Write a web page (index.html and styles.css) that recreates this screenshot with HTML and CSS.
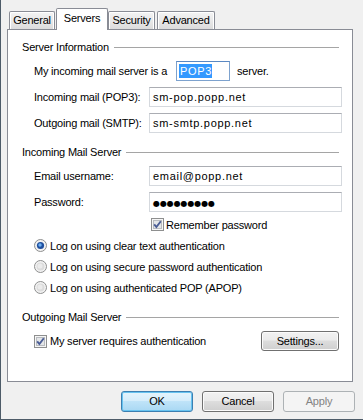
FILE: index.html
```html
<!DOCTYPE html>
<html>
<head>
<meta charset="utf-8">
<title>Servers</title>
<link rel="stylesheet" href="styles.css">
</head>
<body>
<div class="dialog">
  <div class="tabs">
    <div class="tab t-general">General</div>
    <div class="tab active t-servers">Servers</div>
    <div class="tab t-security">Security</div>
    <div class="tab t-advanced">Advanced</div>
  </div>
  <div class="panel">
    <div class="group-head"><span>Server Information</span></div>
    <div class="rows">
      <div class="row r-type">
        <span class="lbl-wide">My incoming mail server is a</span>
        <div class="textbox small focused"><span class="sel">POP3</span></div>
        <span class="after">server.</span>
      </div>
      <div class="row field">
        <span class="lbl">Incoming mail (POP3):</span>
        <div class="textbox">sm-pop.popp.net</div>
      </div>
      <div class="row field">
        <span class="lbl">Outgoing mail (SMTP):</span>
        <div class="textbox">sm-smtp.popp.net</div>
      </div>
    </div>

    <div class="group-head gap-head"><span>Incoming Mail Server</span></div>
    <div class="rows">
      <div class="row field first">
        <span class="lbl">Email username:</span>
        <div class="textbox">email@popp.net</div>
      </div>
      <div class="row field">
        <span class="lbl">Password:</span>
        <div class="textbox"><span class="dots">●●●●●●●●●</span></div>
      </div>
      <div class="row check-row remember">
        <svg class="cb" width="13" height="13" viewBox="0 0 13 13"><rect x="0.5" y="0.5" width="12" height="12" fill="#f6f6f6" stroke="#8e8f8f"/><rect x="2.5" y="2.5" width="8" height="8" fill="#e4e6e8" stroke="#b9bcc0"/><path d="M3.2 6.3 L5.4 9 L9.8 3.2" fill="none" stroke="#4a5d96" stroke-width="1.9"/></svg>
        <span>Remember password</span>
      </div>
      <div class="radios">
        <div class="radio-row">
          <svg class="rb" width="13" height="13" viewBox="0 0 13 13"><circle cx="6.5" cy="6.5" r="6" fill="#f2f2f2" stroke="#8e8f8f"/><circle cx="6.5" cy="6.5" r="3.6" fill="#1f4f9e"/><circle cx="6" cy="6" r="1.7" fill="#6fb0f0"/></svg>
          <span>Log on using clear text authentication</span>
        </div>
        <div class="radio-row">
          <svg class="rb" width="13" height="13" viewBox="0 0 13 13"><circle cx="6.5" cy="6.5" r="6" fill="#f2f2f2" stroke="#8e8f8f"/><circle cx="6.5" cy="6.5" r="4" fill="#dcdcdc"/><circle cx="6" cy="6" r="2.5" fill="#ebebeb"/></svg>
          <span>Log on using secure password authentication</span>
        </div>
        <div class="radio-row">
          <svg class="rb" width="13" height="13" viewBox="0 0 13 13"><circle cx="6.5" cy="6.5" r="6" fill="#f2f2f2" stroke="#8e8f8f"/><circle cx="6.5" cy="6.5" r="4" fill="#dcdcdc"/><circle cx="6" cy="6" r="2.5" fill="#ebebeb"/></svg>
          <span>Log on using authenticated POP (APOP)</span>
        </div>
      </div>
    </div>

    <div class="group-head gap-head2"><span>Outgoing Mail Server</span></div>
    <div class="rows">
      <div class="row auth-row">
        <svg class="cb" width="13" height="13" viewBox="0 0 13 13"><rect x="0.5" y="0.5" width="12" height="12" fill="#f6f6f6" stroke="#8e8f8f"/><rect x="2.5" y="2.5" width="8" height="8" fill="#e4e6e8" stroke="#b9bcc0"/><path d="M3.2 6.3 L5.4 9 L9.8 3.2" fill="none" stroke="#4a5d96" stroke-width="1.9"/></svg>
        <span>My server requires authentication</span>
        <div class="btn settings">Settings...</div>
      </div>
    </div>
  </div>
  <div class="buttons">
    <div class="btn default">OK</div>
    <div class="btn">Cancel</div>
    <div class="btn disabled">Apply</div>
  </div>
</div>
</body>
</html>
```

FILE: styles.css
```css
* { box-sizing: border-box; }
html, body { margin: 0; padding: 0; }
body {
  width: 363px;
  height: 420px;
  overflow: hidden;
  background: #f0f0f0;
  font: 11px "Liberation Sans", Arial, sans-serif;
  letter-spacing: -0.2px;
  color: #000;
}
.dialog {
  height: 420px;
  border-left: 1px solid #4d5b68;
  border-bottom: 1px solid #4d5b68;
  padding: 8px 0 0 6px;
  display: flex;
  flex-direction: column;
}
/* tabs */
.tabs {
  height: 21px;
  display: flex;
  align-items: flex-end;
  padding-left: 2px;
}
.tab {
  height: 18px;
  border: 1px solid #898c95;
  border-bottom: none;
  border-radius: 2px 2px 0 0;
  background: linear-gradient(#f4f4f4, #e6e6e6 60%, #dcdcdc);
  box-shadow: inset 1px 1px 0 #fff, inset -1px 0 0 #fff;
  text-align: center;
  line-height: 17px;
}
.t-general { width: 46px; }
.t-servers { width: 52px; margin-left: 1px; }
.t-security { width: 47px; }
.t-advanced { width: 58px; margin-left: 2px; }
.tab.active {
  height: 22px;
  margin-bottom: -1px;
  background: #fff;
  box-shadow: none;
  line-height: 19px;
  position: relative;
  z-index: 2;
}
/* panel */
.panel {
  width: 346px;
  height: 353px;
  background: #fff;
  border: 1px solid #898c95;
  padding: 10px 10px 0 14px;
}
.group-head {
  height: 14px;
  display: flex;
  align-items: center;
  gap: 5px;
}
.group-head::after {
  content: "";
  flex: 1;
  height: 1px;
  background: #a5a5a5;
  margin-right: 3px;
}
.gap-head { margin-top: 12px; }
.gap-head2 { margin-top: 12px; }
.rows { padding-left: 12px; }
.row {
  display: flex;
  align-items: center;
  height: 20px;
  margin-top: 6px;
}
.r-type { margin-top: 7px; }
.field.first { margin-top: 7px; }
.lbl-wide { width: 142px; }
.lbl { width: 115px; }
.after { margin-left: 7px; }
.textbox {
  width: 193px;
  height: 20px;
  border: 1px solid #d5d9de;
  border-top-color: #abadb3;
  background: #fff;
  padding-left: 3px;
  line-height: 18px;
  white-space: nowrap;
  letter-spacing: 0.7px;
}
.textbox.small { width: 54px; padding-left: 2px; }
.textbox.focused {
  border-color: #7da2ce;
  border-top-color: #5b88c2;
}
.sel {
  background: #3399ff;
  color: #fff;
  display: inline-block;
  line-height: 14px;
  padding: 0 0 0 1px;
}
.dots {
  font-family: "DejaVu Sans", sans-serif;
  font-size: 8px;
  letter-spacing: -0.1px;
}
.check-row { height: 13px; }
.remember { margin-left: 117px; }
.remember span { margin-left: 2px; }
.cb, .rb { flex: none; display: block; }
.auth-row span, .radio-row span { margin-left: 3px; }
.radios { margin-top: 4px; }
.radio-row {
  height: 21px;
  display: flex;
  align-items: center;
}
.auth-row { margin-top: 7px; }
/* buttons */
.btn {
  width: 72px;
  height: 21px;
  border: 1px solid #707070;
  border-radius: 3px;
  background: linear-gradient(#f2f2f2, #ebebeb 45%, #dddddd 50%, #cfcfcf);
  box-shadow: inset 0 0 0 1px #fbfbfb;
  text-align: center;
  line-height: 19px;
}
.settings {
  width: 78px;
  height: 20px;
  line-height: 18px;
  margin-left: auto;
  margin-right: 3px;
}
.buttons {
  display: flex;
  justify-content: flex-end;
  gap: 9px;
  margin-top: 9px;
  padding-right: 8px;
}
.btn.default {
  border-color: #3c7fb1;
  background: linear-gradient(#e5f4fc, #d5edfb 45%, #bfe3f8 50%, #a9d8f3);
  box-shadow: inset 0 0 0 1px #67c3f0;
}
.btn.disabled {
  border-color: #adb2b5;
  background: #f4f4f4;
  box-shadow: none;
  color: #838383;
}
```
